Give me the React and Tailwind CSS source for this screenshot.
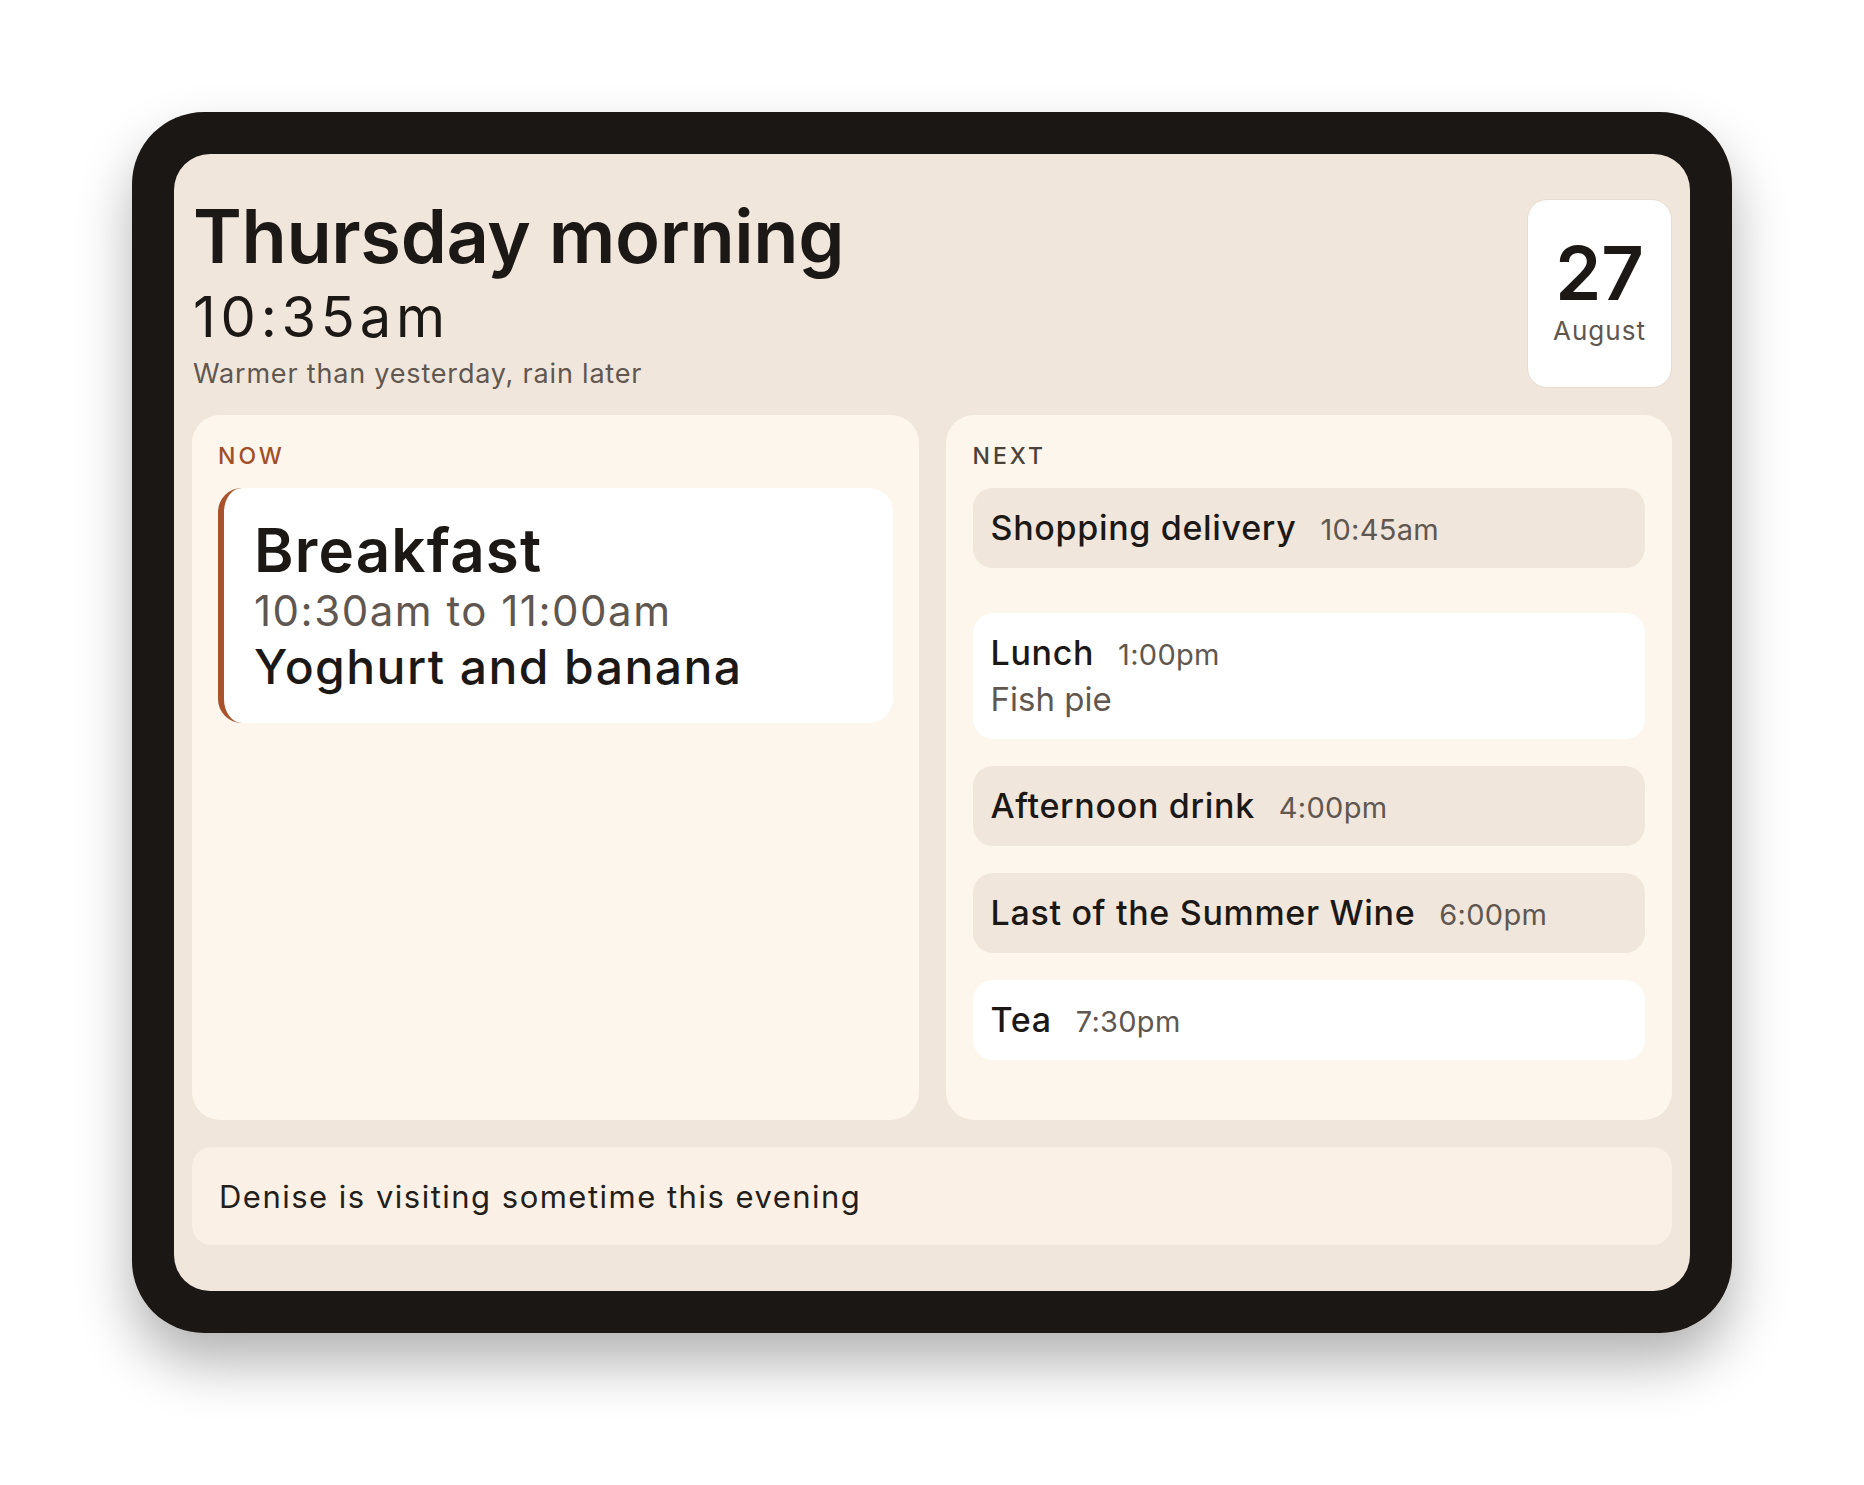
const upcoming = [
    { title: "Shopping delivery", time: "10:45am", tone: "beige", extra: true },
    { title: "Lunch", time: "1:00pm", detail: "Fish pie", tone: "white" },
    { title: "Afternoon drink", time: "4:00pm", tone: "beige" },
    { title: "Last of the Summer Wine", time: "6:00pm", tone: "beige" },
    { title: "Tea", time: "7:30pm", tone: "white" },
];

const NextItem = ({ item }) => {
    const bg = item.tone === "white" ? "bg-white" : "bg-[#f0e6db]";
    return (
        <div className={`rounded-[20px] px-[18px] pt-[23px] pb-[23px] ${bg} ${item.extra ? "mb-[18px]" : ""}`}>
            <div className="flex items-baseline gap-[24px]">
                <span className="text-[34px] leading-none font-medium tracking-[0.02em] text-[#1c1815]">{item.title}</span>
                <span className="text-[29px] leading-none tracking-[0.01em] text-[#5f5750]">{item.time}</span>
            </div>
            {item.detail && (
                <div className="mt-[13px] text-[33px] leading-none text-[#5f5750]">{item.detail}</div>
            )}
        </div>
    );
};

export default function App() {
    return (
        <div className="min-h-screen bg-white flex justify-center pt-[112px] font-['Inter','Noto_Sans',sans-serif]">
            {/* Device frame */}
            <div className="w-[1600px] h-[1221px] rounded-[72px] bg-[#1b1714] p-[42px] shadow-[0_30px_55px_rgba(0,0,0,0.3)]">
                <div className="h-full rounded-[36px] bg-[#f0e6db] px-[18px] pt-[45px] pb-[46px] flex flex-col gap-[27px]">
                    {/* Header */}
                    <div className="flex justify-between items-start h-[189px] shrink-0">
                        <div className="pl-[1px]">
                            <h1 className="text-[74px] leading-none font-semibold tracking-[-0.005em] text-[#1c1815]">Thursday morning</h1>
                            <div className="mt-[16px] text-[56px] leading-none font-normal tracking-[0.085em] text-[#1c1815]">10:35am</div>
                            <p className="mt-[15px] text-[27px] leading-none tracking-[0.03em] text-[#5f5750]">Warmer than yesterday, rain later</p>
                        </div>
                        <div className="w-[145px] h-[189px] rounded-[20px] bg-white border border-[#e7dccf] flex flex-col items-center justify-center gap-[8px] pb-[7px]">
                            <div className="text-[74px] leading-none font-semibold text-[#1c1815]">27</div>
                            <div className="text-[26px] leading-none tracking-[0.04em] text-[#5f5750]">August</div>
                        </div>
                    </div>

                    {/* Now / Next */}
                    <div className="flex-1 grid grid-cols-2 gap-[27px] min-h-0">
                        <section className="rounded-[28px] bg-[#fdf6ec] px-[26px] pt-[30px]">
                            <h2 className="text-[23px] leading-none font-medium tracking-[0.13em] text-[#a24f29] mb-[20px]">NOW</h2>
                            <div className="rounded-[24px] bg-white border-l-[6px] border-[#a8532c] pl-[30px] pr-6 pt-[32px] pb-[32px]">
                                <div className="text-[60px] leading-none font-semibold tracking-[0.02em] text-[#1c1815]">Breakfast</div>
                                <div className="mt-[10px] text-[42px] leading-none tracking-[0.036em] text-[#5f5750]">10:30am to 11:00am</div>
                                <div className="mt-[11px] text-[48px] leading-none font-medium tracking-[0.03em] text-[#1c1815]">Yoghurt and banana</div>
                            </div>
                        </section>

                        <section className="rounded-[28px] bg-[#fdf6ec] px-[27px] pt-[30px]">
                            <h2 className="text-[23px] leading-none font-medium tracking-[0.13em] text-[#4a423c] mb-[20px]">NEXT</h2>
                            <div className="flex flex-col gap-[27px]">
                                {upcoming.map((item) => (
                                    <NextItem key={item.title} item={item} />
                                ))}
                            </div>
                        </section>
                    </div>

                    {/* Note */}
                    <div className="h-[98px] shrink-0 rounded-[20px] bg-[#fbf0e6] px-[27px] flex items-center">
                        <p className="text-[31px] leading-none tracking-[0.048em] text-[#231e1a]">Denise is visiting sometime this evening</p>
                    </div>
                </div>
            </div>
        </div>
    );
}
